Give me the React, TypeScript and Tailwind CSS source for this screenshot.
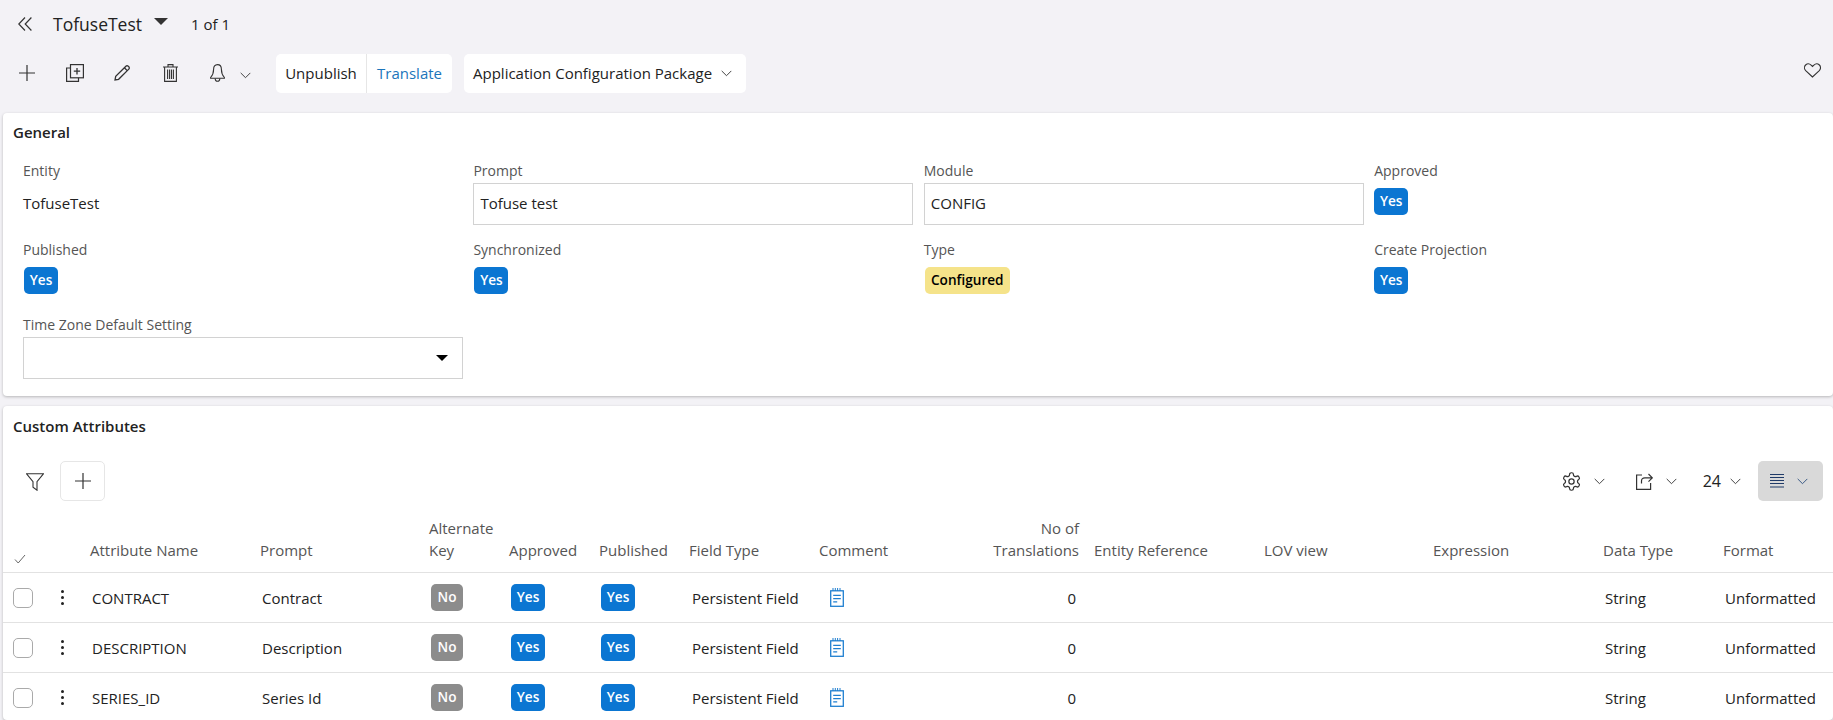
import React from "react";

const stroke = "#333";

function Chevron({ className = "", color = "#444" }: { className?: string; color?: string }) {
  return (
    <svg className={className} width="11" height="7" viewBox="0 0 11 7" fill="none">
      <path d="M.7.9 5.5 5.7 10.3.9" stroke={color} strokeWidth="1" />
    </svg>
  );
}

function Plus({ size = 16 }: { size?: number }) {
  return (
    <svg width={size} height={size} viewBox="0 0 16 16" fill="none">
      <path d="M8 0v16M0 8h16" stroke={stroke} strokeWidth="1.2" />
    </svg>
  );
}

function CopyIcon() {
  return (
    <svg width="18" height="18" viewBox="0 0 18 18" fill="none" stroke={stroke} strokeWidth="1.2">
      <path d="M4.5 4H.6v13.4h11.9v-3.6" />
      <rect x="4.5" y=".6" width="12.9" height="13.2" />
      <path d="M11 4v6.4M7.8 7.2h6.4" strokeWidth="1.3" />
    </svg>
  );
}

function PencilIcon() {
  return (
    <svg width="16" height="16" viewBox="0 0 16 16" fill="none" stroke={stroke} strokeWidth="1.3">
      <path d="M1 15l.7-3.6L11.9 1.2a1.6 1.6 0 0 1 2.3 0l.6.6a1.6 1.6 0 0 1 0 2.3L4.6 14.3 1 15Z" />
      <path d="M10.4 2.8l2.8 2.8" />
    </svg>
  );
}

function TrashIcon() {
  return (
    <svg width="15" height="18" viewBox="0 0 15 18" fill="none" stroke={stroke} strokeWidth="1.1">
      <path d="M0 3h15M5 3V.6h5V3M1.6 3v14.4h11.8V3" />
      <path d="M4.6 5.5v9.5M6.6 5.5v9.5M8.5 5.5v9.5M10.4 5.5v9.5" />
    </svg>
  );
}

function BellIcon() {
  return (
    <svg width="15" height="18" viewBox="0 0 15 18" fill="none" stroke={stroke} strokeWidth="1.1">
      <path d="M7.5.6c-2.6 0-3.9 2-3.9 4.6 0 3.8-.9 6-3 8.3v.7h13.8v-.7c-2.1-2.3-3-4.5-3-8.3C11.4 2.6 10.1.6 7.5.6Z" />
      <path d="M5.2 14.4c0 1.7 1 2.8 2.3 2.8s2.3-1.1 2.3-2.8" />
    </svg>
  );
}

function Badge({ children, kind = "yes" }: { children: React.ReactNode; kind?: "yes" | "no" }) {
  return (
    <span
      className={
        kind === "yes"
          ? "flex h-[27px] w-[34px] items-center justify-center rounded-[5px] bg-[#0b76d2] text-[13.6px] font-semibold text-white"
          : "flex h-[27px] w-[32px] items-center justify-center rounded-[5px] bg-[#8c8c8c] text-[13.6px] font-semibold text-white"
      }
    >
      {children}
    </span>
  );
}

function Field({ label, children }: { label: string; children: React.ReactNode }) {
  return (
    <div className="flex flex-col">
      <div className="flex h-5 items-center pb-[1px] text-[14px] text-[#555]">{label}</div>
      {children}
    </div>
  );
}

function TextBox({ value }: { value: string }) {
  return (
    <div className="mt-[2px] flex h-[42px] w-[440px] items-center border border-[#d2d2d2] bg-white pb-[2px] pl-[6px] text-[15px] text-[#222]">
      {value}
    </div>
  );
}

type Col = { title: string[]; w: string; right?: boolean };

const columns: Col[] = [
  { title: [], w: "w-[47px]" },
  { title: [], w: "w-[37px]" },
  { title: ["Attribute Name"], w: "w-[170px]" },
  { title: ["Prompt"], w: "w-[169px]" },
  { title: ["Alternate", "Key"], w: "w-[80px]" },
  { title: ["Approved"], w: "w-[90px]" },
  { title: ["Published"], w: "w-[90px]" },
  { title: ["Field Type"], w: "w-[130px]" },
  { title: ["Comment"], w: "w-[109px]" },
  { title: ["No of", "Translations"], w: "w-[166px]", right: true },
  { title: ["Entity Reference"], w: "w-[170px]" },
  { title: ["LOV view"], w: "w-[169px]" },
  { title: ["Expression"], w: "w-[170px]" },
  { title: ["Data Type"], w: "w-[120px]" },
  { title: ["Format"], w: "w-[110px]" },
];

const rows = [
  { name: "CONTRACT", prompt: "Contract" },
  { name: "DESCRIPTION", prompt: "Description" },
  { name: "SERIES_ID", prompt: "Series Id" },
];

function NoteIcon() {
  return (
    <svg width="14" height="19" viewBox="0 0 14 19" fill="none" stroke="#1f7fd0" strokeWidth="1.3">
      <rect x=".7" y="2.8" width="12.6" height="15.5" />
      <path d="M3 0v3M5.3 0v3M7.6 0v3M10 0v3" strokeWidth="1" />
      <path d="M3.2 7.4h7.6M3.2 10.6h7.6M3.2 13.8h4" />
    </svg>
  );
}

function Row({ name, prompt }: { name: string; prompt: string }) {
  return (
    <div className="flex h-[50px] shrink-0 items-center border-b border-[#e2e2e2] text-[15px] text-[#222]">
      <div className={columns[0].w + " pl-[10px]"}>
        <div className="h-5 w-5 rounded-[5px] border border-[#aaa]" />
      </div>
      <div className={columns[1].w + " flex flex-col items-start gap-[3px] pl-[11px]"}>
        <span className="h-[3px] w-[3px] rounded-full bg-[#222]" />
        <span className="h-[3px] w-[3px] rounded-full bg-[#222]" />
        <span className="h-[3px] w-[3px] rounded-full bg-[#222]" />
      </div>
      <div className={columns[2].w + " mt-[2px] pl-[5px]"}>{name}</div>
      <div className={columns[3].w + " mt-[2px] pl-[5px]"}>{prompt}</div>
      <div className={columns[4].w + " pl-[5px]"}><Badge kind="no">No</Badge></div>
      <div className={columns[5].w + " pl-[5px]"}><Badge>Yes</Badge></div>
      <div className={columns[6].w + " pl-[5px]"}><Badge>Yes</Badge></div>
      <div className={columns[7].w + " mt-[2px] pl-[6px]"}>Persistent Field</div>
      <div className={columns[8].w + " flex pl-[14px]"}><NoteIcon /></div>
      <div className={columns[9].w + " mt-[2px] pr-[15px] text-right"}>0</div>
      <div className={columns[10].w} />
      <div className={columns[11].w} />
      <div className={columns[12].w} />
      <div className={columns[13].w + " mt-[2px] pl-[5px]"}>String</div>
      <div className={columns[14].w + " mt-[2px] pl-[5px]"}>Unformatted</div>
    </div>
  );
}

export default function App() {
  return (
    <div
      className="flex h-[720px] w-full flex-col overflow-hidden bg-[#f3f2f6] text-[#222]"
      style={{ fontFamily: '"Open Sans", sans-serif' }}
    >
      <div className="flex h-[48px] shrink-0 items-center pl-[18px]">
        <svg width="14" height="14" viewBox="0 0 14 14" fill="none" stroke="#333" strokeWidth="1.2">
          <path d="M7 .5.8 7 7 13.5M13.4.5 7.2 7l6.2 6.5" />
        </svg>
        <span className="ml-[21px] text-[17.5px] font-medium text-[#222]">TofuseTest</span>
        <span className="mb-[6px] ml-[12px] h-0 w-0 border-x-[7px] border-t-[7px] border-x-transparent border-t-[#333]" />
        <span className="ml-[23px] text-[15px]">1 of 1</span>
      </div>

      <div className="flex h-[50px] shrink-0 items-center pl-[19px]">
        <Plus />
        <div className="ml-[31px] flex"><CopyIcon /></div>
        <div className="ml-[30px] flex"><PencilIcon /></div>
        <div className="ml-[33px] flex"><TrashIcon /></div>
        <div className="ml-[32px] flex"><BellIcon /></div>
        <Chevron className="ml-[15px] mt-[4px]" />
        <div className="ml-[25px] flex h-[39px] w-[176px] rounded-[5px] bg-white text-[15px]">
          <div className="flex w-[91px] items-center justify-center border-r border-[#e6e6e6]">Unpublish</div>
          <div className="flex flex-1 items-center justify-center text-[#1b75bb]">Translate</div>
        </div>
        <div className="ml-[12px] flex h-[39px] w-[282px] items-center rounded-[5px] bg-white pl-[9px] text-[15px]">
          Application Configuration Package
          <Chevron className="ml-[9px]" />
        </div>
        <svg className="ml-auto mr-[12px] mt-[-6px]" width="17" height="15" viewBox="0 0 17 15" fill="none" stroke="#333" strokeWidth="1.1">
          <path d="M8.5 14 1.7 7.6C.1 6 .1 3.5 1.6 2c1.6-1.5 4-1.4 5.5.1l1.4 1.4 1.4-1.4c1.5-1.5 3.9-1.6 5.5-.1 1.5 1.5 1.5 4-.1 5.6L8.5 14Z" />
        </svg>
      </div>

      <section className="ml-[3px] mt-[15px] h-[283px] shrink-0 rounded-[4px] bg-white pl-[20px] shadow-[0_1px_3px_rgba(0,0,0,0.25)]">
        <h2 className="-ml-[10px] flex h-[38px] items-center text-[15px] font-semibold">General</h2>
        <div className="mt-[10px] grid grid-cols-[repeat(4,450.4px)] grid-rows-[79px_75px_auto]">
          <Field label="Entity">
            <div className="mt-[2px] flex h-[42px] items-center pb-[2px] text-[15px]">TofuseTest</div>
          </Field>
          <Field label="Prompt"><TextBox value="Tofuse test" /></Field>
          <Field label="Module"><TextBox value="CONFIG" /></Field>
          <Field label="Approved"><div className="mt-[7px]"><Badge>Yes</Badge></div></Field>
          <Field label="Published"><div className="mt-[7px] pl-[1px]"><Badge>Yes</Badge></div></Field>
          <Field label="Synchronized"><div className="mt-[7px] pl-[1px]"><Badge>Yes</Badge></div></Field>
          <Field label="Type">
            <div className="mt-[7px] pl-[1px]">
              <span className="flex h-[27px] w-[85px] items-center justify-center rounded-[5px] bg-[#f5e38a] text-[13.6px] font-semibold text-black">
                Configured
              </span>
            </div>
          </Field>
          <Field label="Create Projection"><div className="mt-[7px]"><Badge>Yes</Badge></div></Field>
          <Field label="Time Zone Default Setting">
            <div className="mt-[2px] flex h-[42px] w-[440px] items-center justify-end border border-[#d2d2d2] pr-[14px]">
              <span className="h-0 w-0 border-x-[6px] border-t-[6px] border-x-transparent border-t-black" />
            </div>
          </Field>
        </div>
      </section>

      <section className="ml-[3px] mt-[10px] min-h-0 flex-1 rounded-[4px] bg-white shadow-[0_1px_3px_rgba(0,0,0,0.25)]">
        <h2 className="flex h-[40px] items-center pl-[10px] text-[15px] font-semibold">Custom Attributes</h2>
        <div className="mt-[15px] flex h-[40px] items-center pr-[10px]">
          <svg className="ml-[23px] mt-[2px]" width="18" height="18" viewBox="0 0 18 18" fill="none" stroke="#333" strokeWidth="1.1">
            <path d="M.6.8h16.8L11 8.6v8.6l-4-3V8.6L.6.8Z" />
          </svg>
          <div className="ml-[16px] flex h-[40px] w-[45px] items-center justify-center rounded-[5px] border border-[#e6e6e6]">
            <Plus />
          </div>
          <svg className="ml-auto" width="21" height="21" viewBox="0 0 24 24" fill="none" stroke="#333" strokeWidth="1.4">
            <path d="M12.22 2h-.44a2 2 0 0 0-2 2v.18a2 2 0 0 1-1 1.73l-.43.25a2 2 0 0 1-2 0l-.15-.08a2 2 0 0 0-2.73.73l-.22.38a2 2 0 0 0 .73 2.73l.15.1a2 2 0 0 1 1 1.72v.51a2 2 0 0 1-1 1.74l-.15.09a2 2 0 0 0-.73 2.73l.22.38a2 2 0 0 0 2.73.73l.15-.08a2 2 0 0 1 2 0l.43.25a2 2 0 0 1 1 1.73V20a2 2 0 0 0 2 2h.44a2 2 0 0 0 2-2v-.18a2 2 0 0 1 1-1.73l.43-.25a2 2 0 0 1 2 0l.15.08a2 2 0 0 0 2.73-.73l.22-.39a2 2 0 0 0-.73-2.73l-.15-.08a2 2 0 0 1-1-1.74v-.5a2 2 0 0 1 1-1.74l.15-.09a2 2 0 0 0 .73-2.73l-.22-.38a2 2 0 0 0-2.73-.73l-.15.08a2 2 0 0 1-2 0l-.43-.25a2 2 0 0 1-1-1.73V4a2 2 0 0 0-2-2z" />
            <circle cx="12" cy="12" r="3" />
          </svg>
          <Chevron className="ml-[12px]" />
          <svg className="ml-[31px]" width="17" height="18" viewBox="0 0 17 18" fill="none" stroke="#333" strokeWidth="1.2">
            <path d="M6 3H.6v14.4h14V11" />
            <path d="M5.5 11.5V9c0-2 1.3-3.2 3.3-3.2H16M12.5 2l3.8 3.8-3.8 3.8" />
          </svg>
          <Chevron className="ml-[13px]" />
          <span className="ml-[26px] text-[16px]">24</span>
          <Chevron className="ml-[9px]" />
          <div className="ml-[17px] flex h-[40px] w-[65px] items-center rounded-[5px] bg-[#d9d9d9] pl-[12px]">
            <svg width="14" height="14" viewBox="0 0 14 14" stroke="#1f3a68" strokeWidth="1">
              <path d="M0 .5h14M0 3.5h14M0 6.5h14M0 9.5h14M0 13h14" />
            </svg>
            <Chevron className="ml-[13px]" color="#3b5a85" />
          </div>
        </div>

        <div className="mt-[11px] flex h-[61px] items-end border-b border-[#e2e2e2] text-[15px] leading-[22px] text-[#555]">
          {columns.map((col, i) => (
            <div key={i} className={col.w + (col.right ? " pb-[11px] pr-[12px] text-right" : " pb-[11px] pl-[3px]")}>
              {i === 0 ? (
                <svg className="mb-[-3px] ml-[8px]" width="12" height="10" viewBox="0 0 12 10" fill="none" stroke="#666" strokeWidth="1">
                  <path d="M1 5.5 4.2 9 11 1" />
                </svg>
              ) : (
                col.title.map((t) => <div key={t}>{t}</div>)
              )}
            </div>
          ))}
        </div>
        {rows.map((r) => (
          <Row key={r.name} {...r} />
        ))}
      </section>
    </div>
  );
}
